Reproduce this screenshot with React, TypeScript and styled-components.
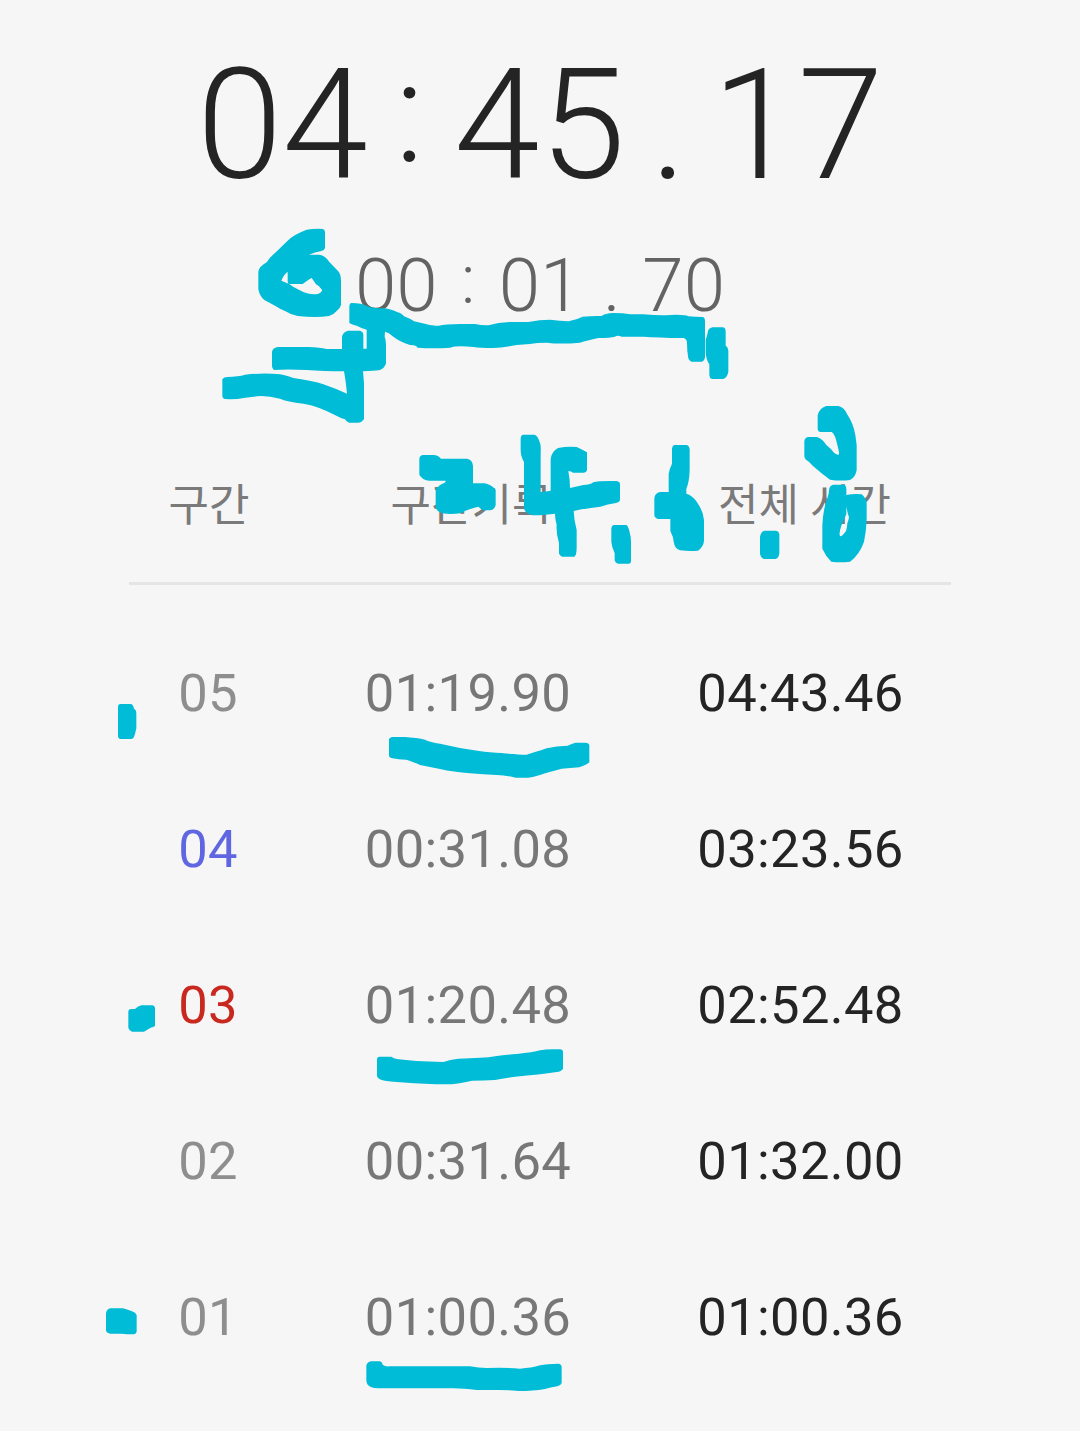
import React from "react";
import styled, { createGlobalStyle } from "styled-components";

const GlobalStyle = createGlobalStyle`
  html, body { margin: 0; padding: 0; background: #f6f6f6; }
`;

const Screen = styled.main`
  position: relative;
  box-sizing: border-box;
  width: 1080px;
  height: 1431px;
  overflow: hidden;
  background: #f6f6f6;
  font-family: Roboto, "Noto Sans CJK KR", sans-serif;
`;

const Clock = styled.div<{ $size: number; $top: number; $height: number; $color: string }>`
  display: flex;
  justify-content: center;
  align-items: baseline;
  padding-top: ${(p) => p.$top}px;
  height: ${(p) => p.$height}px;
  line-height: ${(p) => p.$height}px;
  font-size: ${(p) => p.$size}px;
  font-weight: 300;
  color: ${(p) => p.$color};
`;

const Separator = styled.span<{ $width: number; $scale?: number; $lift?: number; $shift?: number }>`
  width: ${(p) => p.$width}px;
  font-size: ${(p) => p.$scale ?? 1}em;
  text-align: center;
  transform: translate(${(p) => p.$shift ?? 0}px, ${(p) => -(p.$lift ?? 0)}px);
`;

const Table = styled.section`
  width: 822px;
  margin: 128px 0 0 129px;
`;

const Columns = styled.div`
  display: grid;
  grid-template-columns: 158px 362px 303px;
  text-align: center;
`;

const Head = styled(Columns)`
  grid-template-columns: 160px 365px 301px;
  height: 124px;
  line-height: 96px;
  font-size: 44px;
  color: #7a7a7a;
  border-bottom: 3px solid #e5e5e5;
  white-space: nowrap;
`;

const Row = styled(Columns)`
  height: 156px;
  line-height: 156px;
  font-size: 52.5px;
  letter-spacing: 0.35px;
`;

const Rows = styled.div`
  padding-top: 30px;
`;

const Lap = styled.span<{ $color: string }>`
  color: ${(p) => p.$color};
`;
const Split = styled.span`
  color: #777;
`;
const Total = styled.span`
  color: #242424;
`;

const Ink = styled.svg`
  position: absolute;
  inset: 0;
  pointer-events: none;
`;

const laps = [
  { lap: "05", split: "01:19.90", total: "04:43.46", color: "#8e8e8e" },
  { lap: "04", split: "00:31.08", total: "03:23.56", color: "#6065e2" },
  { lap: "03", split: "01:20.48", total: "02:52.48", color: "#c9281f" },
  { lap: "02", split: "00:31.64", total: "01:32.00", color: "#8e8e8e" },
  { lap: "01", split: "01:00.36", total: "01:00.36", color: "#8e8e8e" },
];

/* Handwriting, in groups that share an origin; three path units to a pixel. */
const strokes = [
  {
    x: 210,
    y: 220,
    d: [
      "M290 29 Q315 25 339 27 Q345 29 345 37 V84 Q343 92 334 93 Q315 96 297 104 H328 Q346 106 358 126 L384 153 Q393 163 393 181 V255 Q391 264 380 273 Q370 285 357 288 Q320 294 263 288 Q242 284 225 273 Q212 268 195 257 L163 240 Q149 229 145 208 V155 Q147 140 170 127 Q177 114 195 99 L233 62 Q250 44 290 29Z M214 182 L239 193 Q250 203 268 210 Q302 228 326 221 Q338 215 336 209 Q329 198 318 193 Q310 181 305 174 Q298 177 278 192 H237 Q233 192 233 184 V155 Q221 164 214 182Z",
      "M425 249 Q455 249 469 257 Q490 266 522 265 Q546 268 561 276 Q576 280 582 289 Q601 296 612 304 L638 310 Q665 319 686 317 Q706 312 750 312 H795 Q820 317 840 315 Q862 308 900 306 H955 Q990 299 1020 299 Q1050 302 1076 304 Q1100 299 1118 290 Q1150 287 1175 288 Q1184 280 1210 279 Q1240 279 1260 283 H1300 Q1350 287 1380 285 Q1425 283 1435 289 Q1455 291 1479 291 Q1485 293 1485 302 V412 Q1483 423 1476 425 H1444 Q1437 423 1435 415 Q1431 395 1431 370 Q1431 357 1421 354 Q1340 353 1300 350 H1235 Q1222 344 1215 350 Q1202 354 1165 354 Q1130 362 1110 368 Q1050 373 1010 368 Q980 368 960 372 L920 375 Q880 383 850 384 Q810 384 790 381 Q740 376 721 383 Q670 387 623 383 Q618 374 600 375 Q571 367 547 348 Q537 338 525 335 L524 350 Q529 362 528 380 V429 Q525 444 510 450 Q490 453 459 454 L462 490 V598 Q456 607 445 608 H417 Q409 606 405 598 Q390 594 376 586 Q330 560 281 551 Q230 545 210 536 Q170 526 140 529 L106 533 Q75 539 44 537 Q37 535 37 527 V478 Q40 472 52 471 Q85 470 105 464 Q160 458 210 463 Q240 470 250 474 Q310 482 340 493 Q380 507 411 521 Q407 480 402 454 Q340 454 290 450 Q230 447 192 450 Q186 446 186 438 V396 Q187 384 203 381 H295 Q330 383 350 387 H396 V351 Q397 337 414 332 H450 Q460 335 460 344 V386 H470 V329 Q455 325 440 317 Q425 314 418 309 V260 Q418 250 425 249Z",
    ],
  },
  {
    x: 480,
    y: 240,
    d: ["M698 262 H729 Q737 263 737 275 V317 Q746 322 745 340 V396 Q741 413 730 417 H696 Q688 414 688 405 V373 Q679 360 677 338 V300 Q682 285 684 273 Q687 264 698 262Z"],
  },
  {
    x: 380,
    y: 420,
    d: [
      "M128 105 H160 Q175 106 183 116 H260 Q278 119 279 138 V190 H314 Q331 192 347 209 V255 Q343 270 330 271 H309 Q302 267 295 260 Q285 262 269 268 Q257 271 242 280 Q210 284 187 280 Q169 273 167 262 V209 Q176 194 194 188 Q197 186 197 182 H148 Q127 180 118 164 V116 Q119 107 128 105Z",
      "M430 44 H464 Q474 47 481 72 Q483 80 482 100 V216 Q500 214 512 212 V116 Q515 94 534 84 Q560 79 590 81 Q602 86 621 97 V149 Q620 158 609 158 H579 Q574 154 565 153 Q570 180 570 204 Q590 199 610 195 Q630 195 640 187 Q655 182 710 183 Q720 185 720 193 V241 Q718 248 708 249 Q683 252 661 260 Q620 264 581 273 Q582 300 590 330 V383 Q590 405 583 410 H546 Q538 408 537 400 V370 Q528 340 530 315 Q525 297 525 281 Q500 285 457 286 Q436 280 432 266 V126 Q422 110 422 91 V55 Q423 45 430 44Z",
      "M701 315 H739 Q746 319 750 342 Q753 350 753 365 V425 Q752 431 746 431 H715 Q706 430 704 421 V400 Q695 380 694 365 V325 Q695 316 701 315Z",
    ],
  },
  {
    x: 600,
    y: 395,
    d: [
      "M223 150 H260 Q268 152 269 163 V225 Q268 260 259 282 V296 Q276 300 290 320 Q311 350 312 376 V438 Q310 456 294 467 Q270 470 240 466 Q225 461 222 445 Q220 424 211 408 V372 H174 Q163 368 163 359 V310 Q165 293 180 291 H206 V236 Q209 220 216 206 V160 Q218 151 223 150Z",
      "M493 407 H526 Q537 408 538 418 V476 Q535 490 526 492 H491 Q481 487 480 475 V425 Q483 410 493 407Z",
      "M679 33 H715 Q732 36 741 57 Q760 85 766 120 L770 150 V225 Q767 247 750 255 Q720 259 690 254 Q665 236 639 213 Q629 200 618 194 Q613 190 613 183 V139 Q614 128 624 126 H651 Q668 132 679 150 Q692 160 702 173 Q712 181 716 179 Q719 175 714 158 Q705 115 695 111 H660 Q653 110 653 100 V60 Q660 38 679 33Z",
      "M699 269 H732 Q739 271 739 282 V300 Q760 296 785 298 Q799 310 800 325 V373 Q799 408 792 440 Q778 480 750 500 Q720 503 694 500 Q676 482 667 461 V390 Q670 340 681 313 Q687 298 688 280 Q690 271 699 269Z M739 333 V358 Q730 375 724 392 Q715 418 721 424 Q727 424 738 408 Q742 395 742 385 Q746 375 747 367 Q741 350 739 333Z",
    ],
  },
  {
    x: 100,
    y: 640,
    d: [
      "M60 192 H93 Q100 194 102 206 Q109 209 109 220 V265 Q106 280 103 288 Q101 296 95 297 H60 Q54 296 54 288 V200 Q54 193 60 192Z",
      "M876 291 H915 Q930 293 948 294 Q965 296 975 299 Q990 307 1020 311 L1080 324 Q1140 334 1170 337 Q1220 341 1242 342 Q1255 345 1280 344 Q1305 337 1340 325 Q1370 318 1403 317 Q1412 312 1426 308 H1456 Q1467 308 1468 316 V367 Q1460 375 1438 382 Q1410 385 1385 386 Q1345 396 1320 405 Q1300 411 1285 413 H1247 Q1220 406 1190 405 Q1150 404 1110 400 Q1060 396 1020 387 L960 375 Q930 361 918 359 Q895 359 877 355 Q868 353 867 348 V298 Q868 293 876 291Z",
    ],
  },
  {
    x: 100,
    y: 960,
    d: [
      "M124 136 H158 Q165 138 165 144 V198 Q160 201 152 203 Q142 209 132 215 H96 Q87 211 85 203 V154 Q86 147 95 147 H105 Q112 140 124 136Z",
      "M837 290 H874 Q882 295 890 297 Q940 304 1030 306 Q1050 299 1075 296 Q1150 295 1185 289 Q1220 284 1250 282 Q1300 277 1320 271 Q1340 266 1380 268 Q1389 269 1389 276 V326 Q1384 334 1370 336 Q1320 344 1245 350 Q1210 356 1185 360 Q1150 362 1116 362 Q1080 370 1055 373 H1008 Q940 370 880 365 Q850 363 838 357 Q831 353 831 347 V297 Q832 291 837 290Z",
    ],
  },
  {
    x: 90,
    y: 1280,
    d: [
      "M62 85 H99 Q115 89 126 94 Q137 97 140 105 V155 Q138 162 132 163 Q110 163 95 161 H60 Q49 159 48 151 V100 Q50 87 62 85Z",
      "M842 244 H870 Q877 246 878 254 Q885 260 898 259 H1140 Q1165 264 1190 264 Q1250 262 1290 266 Q1325 264 1350 256 Q1370 251 1405 251 Q1414 252 1415 260 V309 Q1413 316 1402 319 Q1380 322 1365 327 Q1330 333 1285 333 Q1250 329 1210 330 H1160 Q1120 325 1090 325 H865 Q840 325 832 313 Q829 307 829 300 V255 Q832 246 842 244Z",
    ],
  },
];

export default function App() {
  return (
    <Screen>
      <GlobalStyle />
      <Clock $size={154.5} $top={34} $height={183} $color="#242424">
        <span>04</span>
        <Separator $width={86} $scale={0.91} $lift={17} $shift={-1.5}>:</Separator>
        <span>45</span>
        <Separator $width={86.5}>.</Separator>
        <span>17</span>
      </Clock>
      <Clock $size={74.5} $top={25} $height={88} $color="#636363">
        <span>00</span>
        <Separator $width={61} $scale={0.91} $lift={8}>:</Separator>
        <span>01</span>
        <Separator $width={61}>.</Separator>
        <span>70</span>
      </Clock>
      <Table>
        <Head>
          <span>구간</span>
          <span>구간기록</span>
          <span>전체 시간</span>
        </Head>
        <Rows>
          {laps.map((l) => (
            <Row key={l.lap}>
              <Lap $color={l.color}>{l.lap}</Lap>
              <Split>{l.split}</Split>
              <Total>{l.total}</Total>
            </Row>
          ))}
        </Rows>
      </Table>
      <Ink width="1080" height="1431" viewBox="0 0 1080 1431" fill="#00bcd7" fillRule="evenodd">
        {strokes.map((group) => (
          <g key={`${group.x}-${group.y}`} transform={`translate(${group.x} ${group.y}) scale(${1 / 3})`}>
            {group.d.map((d) => (
              <path key={d} d={d} />
            ))}
          </g>
        ))}
      </Ink>
    </Screen>
  );
}
